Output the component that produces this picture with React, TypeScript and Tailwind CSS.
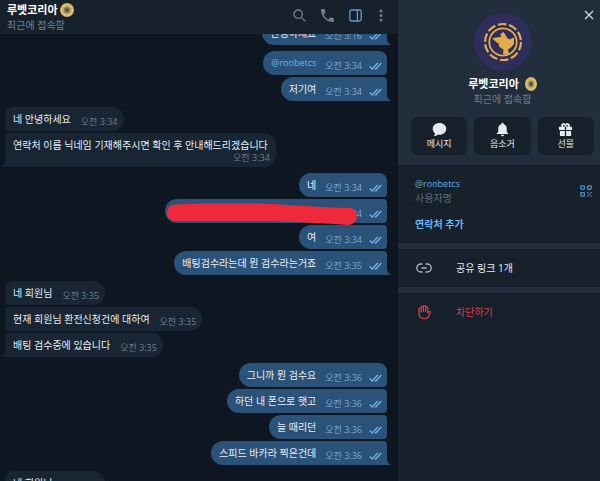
import React from "react";
import clsx from "clsx";

// ============ TYPES ============
interface Message {
  text: string;
  time: string;
  link?: boolean;
  wide?: boolean;
  redacted?: boolean;
}

interface MessageGroup {
  outgoing: boolean;
  messages: Message[];
}

const groups: MessageGroup[] = [
  { outgoing: true, messages: [{ text: "안녕하세요", time: "오전 3:16" }] },
  {
    outgoing: true,
    messages: [
      { text: "@roobetcs", time: "오전 3:34", link: true },
      { text: "저기여", time: "오전 3:34" },
    ],
  },
  {
    outgoing: false,
    messages: [
      { text: "네 안녕하세요", time: "오전 3:34" },
      {
        text: "연락처 이름 닉네임 기재해주시면 확인 후 안내해드리겠습니다",
        time: "오전 3:34",
        wide: true,
      },
    ],
  },
  {
    outgoing: true,
    messages: [
      { text: "네", time: "오전 3:34" },
      { text: "", time: "오전 3:34", redacted: true },
      { text: "여", time: "오전 3:34" },
      { text: "배팅검수라는데 뭔 검수라는거죠", time: "오전 3:35" },
    ],
  },
  {
    outgoing: false,
    messages: [
      { text: "네 회원님", time: "오전 3:35" },
      { text: "현재 회원님 환전신청건에 대하여", time: "오전 3:35" },
      { text: "배팅 검수중에 있습니다", time: "오전 3:35" },
    ],
  },
  {
    outgoing: true,
    messages: [
      { text: "그니까 뭔 검수요", time: "오전 3:36" },
      { text: "하던 내 폰으로 햇고", time: "오전 3:36" },
      { text: "늘 때리던", time: "오전 3:36" },
      { text: "스피드 바카라 찍은건데", time: "오전 3:36" },
    ],
  },
  { outgoing: false, messages: [{ text: "네 회원님", time: "오전 3:36" }] },
];

// ============ ICONS ============
function CoinBadge({ className }: { className?: string }) {
  return (
    <svg viewBox="0 0 28 28" preserveAspectRatio="none" className={className} aria-hidden="true">
      <circle cx="14" cy="14" r="14" fill="#c9ab58" />
      <circle cx="14" cy="14" r="11" fill="none" stroke="#e6d38a" strokeWidth="3" strokeDasharray="3 2" />
      <circle cx="14" cy="14" r="6" fill="#77745f" />
      <circle cx="14" cy="14" r="2.5" fill="#39434c" />
    </svg>
  );
}

function DoubleCheck() {
  return (
    <svg viewBox="0 0 13 8" className="h-2 w-[13px] shrink-0" fill="none" stroke="#6cb4ea" strokeWidth="1.3" aria-hidden="true">
      <path d="M.7 4.4 3.200 7 8.800 1M6 6.400l.7.6L12.300 1" />
    </svg>
  );
}

function Avatar() {
  return (
    <svg viewBox="0 0 58 58" className="size-[58px]" aria-hidden="true">
      <circle cx="29" cy="29" r="29" fill="#2f2d5c" />
      <circle cx="29" cy="29" r="18" fill="none" stroke="#e2ae45" strokeWidth="2.2" strokeDasharray="8.600 2.700" />
      <circle cx="29" cy="29" r="13.700" fill="none" stroke="#e2ae45" strokeWidth="1.800" />
      <path
        d="M19 25.500 25.500 24.500 27.500 25 27 21 29.500 19.500 33 25.500 36 27 39.500 25 39.500 31 36.500 34.500 33.300 36 34.500 41H29.500L30 36.500 25.500 33.500 25 30 22 28.500z"
        fill="#e2ae45"
        stroke="#e2ae45"
        strokeLinejoin="round"
      />
    </svg>
  );
}

// ============ CHAT ============
function ChatHeader() {
  return (
    <header className="flex h-[34px] shrink-0 items-center justify-between bg-[#17212b] pr-[13px] pl-[7px]">
      <div>
        <h1 className="flex h-4 items-center gap-[2px] text-[11px] leading-4 font-bold text-white">
          루벳코리아
          <CoinBadge className="size-[14px]" />
        </h1>
        <p className="text-[10px] leading-[14px] text-[#6d7f8f]">최근에 접속함</p>
      </div>
      <div className="flex items-center gap-[15px] pb-1 text-[#737d87]">
        <button type="button" aria-label="검색">
          <svg viewBox="0 0 13 13" className="size-[13px]" fill="none" stroke="currentColor" strokeWidth="1.3">
            <circle cx="5.2" cy="5.2" r="4.2" />
            <path d="m8.400 8.400 4 4" />
          </svg>
        </button>
        <button type="button" aria-label="전화">
          <svg viewBox="3 3 18 18" className="size-[13px]" fill="currentColor">
            <path d="M6.620 10.790a15.100 15.100 0 0 0 6.590 6.590l2.200-2.200a1 1 0 0 1 1.020-.24 11.400 11.400 0 0 0 3.570.57 1 1 0 0 1 1 1V20a1 1 0 0 1-1 1A17 17 0 0 1 3 4a1 1 0 0 1 1-1h3.500a1 1 0 0 1 1 1c0 1.250.2 2.450.57 3.570a1 1 0 0 1-.25 1.020z" />
          </svg>
        </button>
        <button type="button" aria-label="정보 패널" className="text-[#5a9bd4]">
          <svg viewBox="0 0 13 13" className="size-[13px]" fill="none" stroke="currentColor" strokeWidth="1.300">
            <rect x=".8" y="1" width="11.400" height="11" rx="1.500" />
            <path d="M8.400 1v11" />
          </svg>
        </button>
        <button type="button" aria-label="메뉴">
          <svg viewBox="0 0 8 13" className="h-[13px] w-2" fill="currentColor">
            <circle cx="4" cy="2" r="1.500" />
            <circle cx="4" cy="6.500" r="1.500" />
            <circle cx="4" cy="11" r="1.500" />
          </svg>
        </button>
      </div>
    </header>
  );
}

interface BubbleProps {
  message: Message;
  outgoing: boolean;
  first: boolean;
  last: boolean;
}

function Bubble({ message, outgoing, first, last }: BubbleProps) {
  return (
    <div
      className={clsx(
        "relative flex items-start pl-2",
        message.wide ? "h-[34px]" : "h-6",
        message.redacted && "w-[222px] justify-end",
        outgoing ? "gap-[9px] rounded-l-xl bg-[#2b5278] pr-[5px]" : "gap-[10px] rounded-r-xl bg-[#182533]",
        !outgoing && (message.wide ? "pr-2" : "pr-[6px]"),
        outgoing && (first ? "rounded-tr-lg" : "rounded-tr-sm"),
        outgoing && !last && "rounded-br-sm",
        !outgoing && (first ? "rounded-tl-lg" : "rounded-tl-sm"),
        !outgoing && !last && "rounded-bl-sm"
      )}
    >
      {message.link ? (
        <a href="#roobetcs" className="text-[9px] leading-6 text-[#6cb4ea]">
          {message.text}
        </a>
      ) : (
        <span className="leading-6 text-[#e9edf1]">{message.text}</span>
      )}
      <span
        className={clsx(
          "flex items-center gap-[7px] self-end text-[9px] leading-[18px]",
          outgoing ? "text-[#7da8d3]" : "text-[#6d7f8f]",
          message.wide && "absolute right-[6px] bottom-0"
        )}
      >
        {message.time}
        {outgoing && <DoubleCheck />}
      </span>
      {message.redacted && (
        <svg viewBox="0 0 222 28" className="absolute top-0 left-0 h-7 w-[222px]" aria-hidden="true">
          <path
            d="M10 5.500C40 4 85 4 110 5c28 2 50 3.500 75 4 10 1 9 18-3 17-42-3-77-4-107-4H11C-1 22-1 6 10 5.500z"
            fill="#ed293b"
          />
        </svg>
      )}
      {last && (
        <svg
          viewBox="0 0 4 6"
          className={clsx(
            "absolute bottom-0 h-[6px] w-1",
            outgoing ? "-right-1 text-[#2b5278]" : "-left-1 -scale-x-100 text-[#182533]"
          )}
          fill="currentColor"
          aria-hidden="true"
        >
          <path d="M0 0c.3 3 1.500 4.500 4 6H0z" />
        </svg>
      )}
    </div>
  );
}

function MessageList() {
  return (
    <div className="min-h-0 flex-1 overflow-hidden">
      <div className="-mt-[13px] flex flex-col gap-[6px] pr-[11px] pl-[5px] text-[10px]">
        {groups.map((group, i) => (
          <div
            key={i}
            className={clsx("flex flex-col gap-[2px]", group.outgoing ? "items-end" : "items-start")}
          >
            {group.messages.map((message, j) => (
              <Bubble
                key={j}
                message={message}
                outgoing={group.outgoing}
                first={j === 0}
                last={j === group.messages.length - 1}
              />
            ))}
          </div>
        ))}
      </div>
    </div>
  );
}

// ============ INFO PANEL ============
const actions = [
  {
    label: "메시지",
    icon: (
      <path d="M8 1C3.800 1 .8 3.700.8 7.300c0 2 .9 3.700 2.400 4.900 0 1-.4 1.900-1.300 2.600 1.700.1 3.100-.4 4.100-1.300.6.1 1.300.2 2 .2 4.200 0 7.200-2.800 7.200-6.400S12.200 1 8 1z" />
    ),
  },
  {
    label: "음소거",
    icon: (
      <path d="M8 .8c-.7 0-1.200.5-1.200 1.200v.5C4.700 3 3.500 4.800 3.500 7v3.500L2 12v.8h12V12l-1.500-1.500V7c0-2.200-1.200-4-3.300-4.500V2c0-.7-.5-1.200-1.200-1.200zM6.400 13.600a1.600 1.600 0 0 0 3.200 0z" />
    ),
  },
  {
    label: "선물",
    icon: (
      <path d="M1 5h2.600A2.500 2.500 0 0 1 8 2.600 2.500 2.500 0 0 1 12.400 5H15v3.500H8.700V5H7.300v3.500H1zm4.500-.2h1.700c0-1-.4-1.600-1-1.600s-1 .5-.7 1.600zm3.300 0h1.700c.3-1.100-.1-1.600-.7-1.600s-1 .6-1 1.600zM2 9.500h5.300V15H3a1 1 0 0 1-1-1zm6.700 0H14V14a1 1 0 0 1-1 1H8.700z" />
    ),
  },
];

function ProfileCard() {
  return (
    <section className="relative bg-[#232e3c] pt-[13px] pr-[6px] pb-[5px] pl-[13px]">
      <button type="button" aria-label="닫기" className="absolute top-[10px] right-[6px] text-[#d5dade]">
        <svg viewBox="0 0 10 10" className="size-[10px]" fill="none" stroke="currentColor" strokeWidth="1.3">
          <path d="m1 1 8 8M9 1 1 9" />
        </svg>
      </button>
      <div className="flex flex-col items-center">
        <Avatar />
        <h2 className="mt-[5px] flex items-center gap-[6px] text-[11px] leading-4 font-bold text-white">
          루벳코리아
          <CoinBadge className="h-[14px] w-3" />
        </h2>
        <p className="text-[10px] leading-[14px] text-[#6d7f8f]">최근에 접속함</p>
      </div>
      <div className="mt-[11px] grid grid-cols-3 gap-[7px]">
        {actions.map((action) => (
          <button
            key={action.label}
            type="button"
            className="flex h-[38px] flex-col items-center rounded-md bg-[#17212b] pt-[5px] text-[9px] leading-[14px] text-[#e6eaee]"
          >
            <svg viewBox="0 0 16 16" className="size-[15px]" fill="currentColor" fillRule="evenodd" aria-hidden="true">
              {action.icon}
            </svg>
            {action.label}
          </button>
        ))}
      </div>
    </section>
  );
}

function InfoPanel() {
  return (
    <aside className="flex w-[202px] shrink-0 flex-col gap-[6px] bg-[#232e3c] text-[10px]">
      <ProfileCard />
      <section className="-mt-px h-[78px] bg-[#17212b] pt-3 pr-2 pl-[17px]">
        <div className="flex items-center justify-between">
          <div>
            <a href="#roobetcs" className="block text-[9px] leading-[14px] text-[#5eaee6]">
              @roobetcs
            </a>
            <p className="leading-[14px] text-[#5d6c7a]">사용자명</p>
          </div>
          <button type="button" aria-label="QR 코드" className="text-[#4f8fc4]">
            <svg viewBox="0 0 12 12" className="size-3" fill="none" stroke="currentColor" strokeWidth="1.3">
              <rect x=".8" y=".8" width="3.600" height="3.600" rx=".8" />
              <rect x="7.600" y=".8" width="3.600" height="3.600" rx=".8" />
              <rect x=".8" y="7.600" width="3.600" height="3.600" rx=".8" />
              <path d="M7 7.600h1.400M10.400 7.600h1.400M8.600 9.400h1.600M7 11.200h1.400M10.400 11.200h1.400" />
            </svg>
          </button>
        </div>
        <button type="button" className="mt-3 block leading-[14px] font-bold text-[#6ab7f0]">
          연락처 추가
        </button>
      </section>
      <button type="button" className="flex h-[38px] items-center gap-6 bg-[#17212b] pl-[18px] text-[#e6eaee]">
        <svg viewBox="0 0 16 10" className="h-[10px] w-4" fill="none" stroke="#aab2b9" strokeWidth="1.400" aria-hidden="true">
          <path d="M6.500 1H4.800a4 4 0 0 0 0 8h1.700M9.500 1h1.700a4 4 0 0 1 0 8H9.500M5.300 5h5.400" />
        </svg>
        공유 링크 1개
      </button>
      <div className="flex-1 bg-[#17212b]">
        <button type="button" className="flex h-[38px] items-center gap-6 pl-[18px] text-[#dc3f4c]">
          <svg viewBox="0 0 16 16" className="size-4" fill="none" stroke="currentColor" strokeWidth="1.200" strokeLinecap="round" strokeLinejoin="round" aria-hidden="true">
            <path d="M3 9V5.200a1 1 0 0 1 2.200 0V8M5.200 7.500V3.200a1.100 1.100 0 0 1 2.200 0V7.500M7.400 7.500V2.600a1.100 1.100 0 0 1 2.200 0V7.500M9.600 7.500V3.800a1.100 1.100 0 0 1 2.200 0V9l1-1.200c.8-.9 2-.2 1.500.9l-1.800 3.700C11.700 14 10.400 14.600 8.400 14.600 5 14.600 3 12.800 3 9.800V9" />
          </svg>
          차단하기
        </button>
      </div>
    </aside>
  );
}

// ============ MAIN ============
export default function App() {
  return (
    <div className="flex h-screen overflow-hidden bg-[#0e1621] font-['Open_Sans','Noto_Sans_CJK_KR',sans-serif]">
      <main className="flex min-w-0 flex-1 flex-col">
        <ChatHeader />
        <MessageList />
      </main>
      <InfoPanel />
    </div>
  );
}
